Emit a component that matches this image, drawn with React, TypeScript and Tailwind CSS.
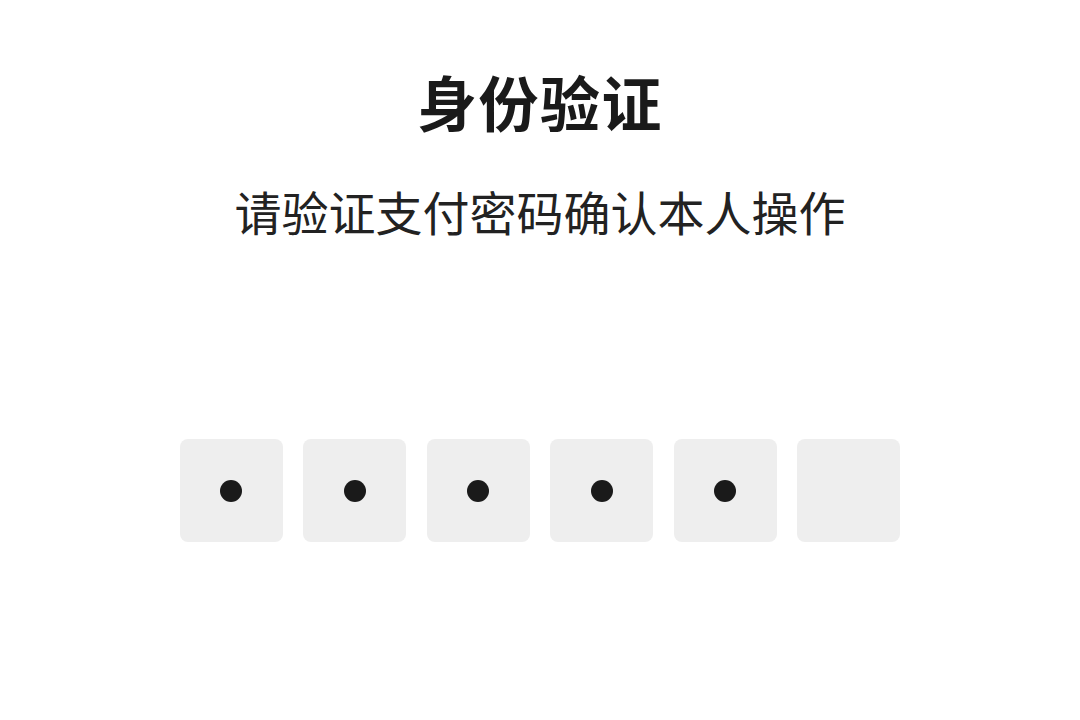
const digits = 5
const total = 6

export default function App() {
  return (
    <div
      className="w-full h-[720px] bg-white flex flex-col items-center text-[#1a1a1a]"
      style={{ fontFamily: '"Noto Sans CJK SC", "Noto Sans", sans-serif' }}
    >
      <h1 className="pt-[71px] text-[60px] leading-[60px] font-bold tracking-[1.5px]">身份验证</h1>
      <p className="mt-[56px] text-[47px] leading-[47px] text-[#222]">请验证支付密码确认本人操作</p>
      <div className="mt-[205px] flex gap-[20.6px]">
        {Array.from({ length: total }).map((_, i) => (
          <div
            key={i}
            className="w-[103px] h-[103px] rounded-[8px] bg-[#eeeeee] flex items-center justify-center"
          >
            {i < digits && <span className="w-[22px] h-[22px] rounded-full bg-[#1a1a1a]" />}
          </div>
        ))}
      </div>
    </div>
  )
}
